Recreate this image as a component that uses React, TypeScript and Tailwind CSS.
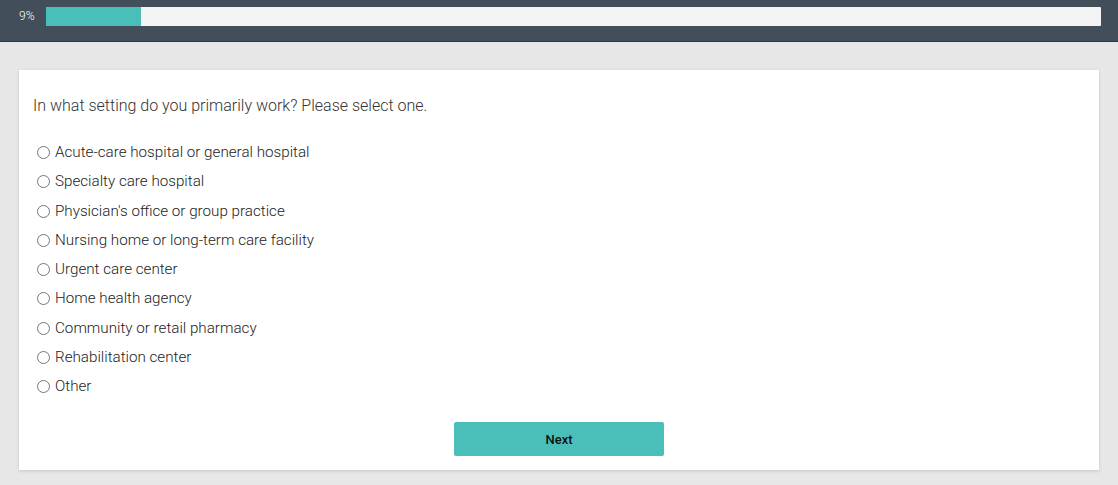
import React, { useState } from 'react';

const options = [
  'Acute-care hospital or general hospital',
  'Specialty care hospital',
  "Physician's office or group practice",
  'Nursing home or long-term care facility',
  'Urgent care center',
  'Home health agency',
  'Community or retail pharmacy',
  'Rehabilitation center',
  'Other',
];

const App = () => {
  const [selected, setSelected] = useState<number | null>(null);
  const progress = 9;

  return (
    <div className="min-h-screen bg-[#e7e7e7] font-['Roboto',sans-serif]">
      {/* Progress header */}
      <div className="h-[42px] bg-[#434e5b] border-b border-[#2e363f] flex items-start pt-[7px] pl-[19px] pr-[17px] gap-[9px]">
        <span className="text-[12px] leading-[19px] font-light text-white w-[18px]">{progress}%</span>
        <div className="flex-1 h-[19px] bg-[#f4f4f5] rounded-[1px] overflow-hidden">
          <div className="h-full bg-[#4abfb9]" style={{ width: `${progress}%` }} />
        </div>
      </div>

      {/* Question card */}
      <div className="px-[19px] pt-[28px] pb-[15px]">
        <div className="bg-white shadow-[0_1px_3px_rgba(0,0,0,0.15)] px-[14px] pt-[25px] pb-[14px]">
          <p className="text-[16px] leading-[22px] font-light text-[#333] mb-[21px]">
            In what setting do you primarily work? Please select one.
          </p>
          <div className="flex flex-col pl-[4px]">
            {options.map((opt, i) => (
              <label key={opt} className="flex items-center gap-[5px] h-[29.25px] text-[15.2px] font-light text-[#222] cursor-pointer">
                <input
                  type="radio"
                  name="setting"
                  checked={selected === i}
                  onChange={() => setSelected(i)}
                  className="w-[13px] h-[13px] m-0 accent-[#4abfb9]"
                />
                {opt}
              </label>
            ))}
          </div>
          <div className="flex justify-center mt-[21px]">
            <button className="w-[210px] h-[34px] bg-[#4abfb9] rounded-[2px] text-[13px] font-medium text-[#111]">
              Next
            </button>
          </div>
        </div>
      </div>
    </div>
  );
};

export default App;
